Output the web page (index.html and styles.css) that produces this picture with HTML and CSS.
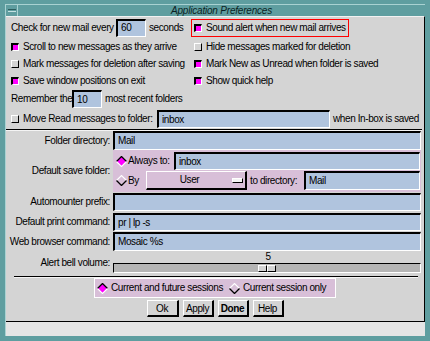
FILE: index.html
```html
<!DOCTYPE html>
<html>
<head>
<meta charset="utf-8">
<title>Application Preferences</title>
<link rel="stylesheet" href="styles.css">
</head>
<body>
<div class="window">
  <div class="frame">
    <div class="titlebar">
      <div class="menubtn"><span class="menubar"></span></div>
      <div class="title">Application Preferences</div>
    </div>
    <div class="content">
      <div class="opts">
        <div class="cell">
          <span class="lbl w-check">Check for new mail every</span>
          <span class="field f-60">60</span>
          <span class="after">seconds</span>
        </div>
        <div class="cell rc-alert">
          <div class="alertbox"><span class="cb on"></span><span>Sound alert when new mail arrives</span></div>
        </div>
        <div class="cell"><span class="cb on"></span><span>Scroll to new messages as they arrive</span></div>
        <div class="cell rc"><span class="cb"></span><span>Hide messages marked for deletion</span></div>
        <div class="cell"><span class="cb"></span><span>Mark messages for deletion after saving</span></div>
        <div class="cell rc"><span class="cb on"></span><span>Mark New as Unread when folder is saved</span></div>
        <div class="cell"><span class="cb on"></span><span>Save window positions on exit</span></div>
        <div class="cell rc"><span class="cb on"></span><span>Show quick help</span></div>
        <div class="cell span2">
          <span class="lbl w-remember">Remember the</span>
          <span class="field f-10">10</span>
          <span class="after">most recent folders</span>
        </div>
        <div class="cell span2">
          <span class="cb"></span>
          <span class="lbl w-move">Move Read messages to folder:</span>
          <span class="field f-move">inbox</span>
          <span class="after">when In-box is saved</span>
        </div>
      </div>

      <div class="sep sep-full"></div>

      <div class="form">
        <div class="frow fr-dir">
          <div class="flabel">Folder directory:</div>
          <div class="field fv h19">Mail</div>
        </div>
        <div class="frow fr-save">
          <div class="flabel">Default save folder:</div>
          <div class="savepanel">
            <div class="sprow sp-a">
              <svg class="radio" width="11" height="11" viewBox="0 0 11 11"><polygon points="5.5,0.5 10.5,5.5 5.5,10.5 0.5,5.5" fill="#ff00ff"/><polyline points="0.5,5.5 5.5,0.5 10.5,5.5" fill="none" stroke="#000" stroke-width="1.3"/><polyline points="0.5,5.5 5.5,10.5 10.5,5.5" fill="none" stroke="#fff" stroke-width="1.1"/></svg>
              <span class="rlabel w-always">Always to:</span>
              <span class="field grow h18">inbox</span>
            </div>
            <div class="sprow sp-b">
              <svg class="radio" width="11" height="11" viewBox="0 0 11 11"><polyline points="0.5,5.5 5.5,0.5 10.5,5.5" fill="none" stroke="#fff" stroke-width="1.1"/><polyline points="0.5,5.5 5.5,10.5 10.5,5.5" fill="none" stroke="#000" stroke-width="1.3"/></svg>
              <span class="rlabel w-by">By</span>
              <div class="optmenu"><span class="optlabel">User</span><span class="optind"></span></div>
              <span class="todir">to directory:</span>
              <span class="field grow h19">Mail</span>
            </div>
          </div>
        </div>
        <div class="frow fr-auto">
          <div class="flabel">Automounter prefix:</div>
          <div class="field fv h18"></div>
        </div>
        <div class="frow fr-print">
          <div class="flabel">Default print command:</div>
          <div class="field fv h18">pr | lp -s</div>
        </div>
        <div class="frow fr-web">
          <div class="flabel">Web browser command:</div>
          <div class="field fv h19">Mosaic %s</div>
        </div>
        <div class="frow fr-alert">
          <div class="flabel alertlbl">Alert bell volume:</div>
          <div class="scale">
            <div class="scaleval">5</div>
            <div class="trough"><span class="thumb"><span class="thalf"></span><span class="thalf"></span></span></div>
          </div>
        </div>
      </div>

      <div class="sep sep-short"></div>

      <div class="sessbox">
        <svg class="radio" width="11" height="11" viewBox="0 0 11 11"><polygon points="5.5,0.5 10.5,5.5 5.5,10.5 0.5,5.5" fill="#ff00ff"/><polyline points="0.5,5.5 5.5,0.5 10.5,5.5" fill="none" stroke="#000" stroke-width="1.3"/><polyline points="0.5,5.5 5.5,10.5 10.5,5.5" fill="none" stroke="#fff" stroke-width="1.1"/></svg>
        <span class="sesslabel">Current and future sessions</span>
        <svg class="radio second" width="11" height="11" viewBox="0 0 11 11"><polyline points="0.5,5.5 5.5,0.5 10.5,5.5" fill="none" stroke="#fff" stroke-width="1.1"/><polyline points="0.5,5.5 5.5,10.5 10.5,5.5" fill="none" stroke="#000" stroke-width="1.3"/></svg>
        <span class="sesslabel">Current session only</span>
      </div>

      <div class="buttons">
        <button class="btn b-ok">Ok</button>
        <button class="btn b-apply">Apply</button>
        <button class="btn b-done">Done</button>
        <button class="btn b-help">Help</button>
      </div>
    </div>
    <div class="status"></div>
  </div>
</div>
</body>
</html>
```

FILE: styles.css
```css
* { box-sizing: border-box; }

html, body {
  margin: 0;
  padding: 0;
  background: #5f9ea0;
}

body {
  font-family: "Liberation Sans", Arial, sans-serif;
  font-size: 10px;
  letter-spacing: -0.4px;
  line-height: 12px;
  color: #000;
}

.window {
  width: 430px;
  height: 341px;
  background: #5f9ea0;
  padding: 4px 5px 5px 5px;
}

.frame {
  width: 420px;
  height: 332px;
  display: flex;
  flex-direction: column;
  border-top: 1px solid #a9d2d2;
  border-left: 1px solid #a9d2d2;
}

.titlebar {
  height: 11px;
  display: flex;
  background: #5f9ea0;
}

.menubtn {
  width: 12px;
  border-right: 1px solid #a9d2d2;
  display: flex;
  align-items: center;
  justify-content: center;
}

.menubar {
  width: 8px;
  height: 3px;
  border-top: 1px solid #2c5e5e;
  border-bottom: 1px solid #c4e2e2;
  background: #5f9ea0;
}

.title {
  flex: 1;
  text-align: center;
  font-style: italic;
  line-height: 11px;
  letter-spacing: -0.2px;
  color: #0b1f1f;
}

.content {
  height: 306px;
  background: #d4d4d4;
  border-top: 1px solid #f2f2f2;
  border-right: 1px solid #000;
  border-bottom: 1px solid #000;
  display: flex;
  flex-direction: column;
}

.status {
  height: 14px;
  background: #e5e5e5;
}

/* top options grid */
.opts {
  display: grid;
  grid-template-columns: 180px 1fr;
  grid-template-rows: 21px 17px 17px 17px 20px 20px;
  padding-left: 5px;
}

.cell {
  display: flex;
  align-items: center;
  white-space: nowrap;
}

.span2 { grid-column: 1 / 3; }

.rc { padding-left: 3px; }

.alertbox {
  width: 158px;
  height: 18px;
  border: 1px solid #ff0000;
  padding-left: 2px;
  display: flex;
  align-items: center;
}

.cb {
  flex: none;
  width: 8px;
  height: 8px;
  margin-right: 4px;
  background: #d4d4d4;
  border-style: solid;
  border-width: 1px;
  border-color: #fff #000 #000 #fff;
}

.cb.on {
  background: #ff00ff;
  border-width: 2px 1px 1px 2px;
  border-color: #000 #fff #fff #000;
}

.lbl { flex: none; }
.w-check { width: 105px; }
.w-remember { width: 61px; }
.w-move { width: 134px; }

.after { margin-left: 3px; }

.field {
  flex: none;
  display: flex;
  align-items: center;
  height: 18px;
  padding: 0 3px;
  background: #b0c4de;
  border-style: solid;
  border-width: 2px 1px 1px 2px;
  border-color: #000 #fff #fff #000;
  white-space: nowrap;
}

.f-60 { width: 30px; }
.f-10 { width: 30px; }
.f-move { width: 173px; }

.h18 { height: 18px; }
.h19 { height: 19px; }

.grow { flex: 1; }

/* separators */
.sep {
  height: 2px;
  border-top: 1px solid #000;
  border-bottom: 1px solid #f4f4f4;
}

.sep-full { margin-right: 2px; }

.sep-short {
  margin: 3px 6px 0 8px;
}

/* form */
.form {
  display: flex;
  flex-direction: column;
}

.frow {
  display: flex;
  align-items: center;
}

.flabel {
  flex: none;
  width: 107px;
  padding-right: 3px;
  text-align: right;
  white-space: nowrap;
}

.fv { width: 308px; }

.fr-auto { margin-top: 1px; }
.fr-print { margin-top: 2px; }
.fr-web { margin-top: 1px; }
.fr-alert { margin-top: 1px; align-items: flex-end; }
.alertlbl { margin-bottom: 4px; }

.savepanel {
  width: 308px;
  height: 42px;
  background: #d8bfd8;
  padding: 2px 1px 2px 3px;
  display: flex;
  flex-direction: column;
  gap: 1px;
}

.sprow {
  display: flex;
  align-items: center;
}

.sp-a { height: 18px; }
.sp-b { height: 19px; }

.radio {
  flex: none;
  display: block;
  margin-right: 1px;
}

.rlabel { flex: none; white-space: nowrap; }
.w-always { width: 46px; }
.w-by { width: 18px; }

.optmenu {
  flex: none;
  width: 101px;
  height: 19px;
  display: flex;
  align-items: center;
  background: #d8bfd8;
  border-style: solid;
  border-width: 1px 2px 2px 1px;
  border-color: #fff #000 #000 #fff;
}

.optlabel {
  flex: 1;
  text-align: center;
}

.optind {
  width: 11px;
  height: 5px;
  margin-right: 2px;
  background: #f4f4f4;
  border-style: solid;
  border-width: 1px;
  border-color: #fff #000 #000 #fff;
}

.todir {
  flex: none;
  width: 54px;
  margin-left: 3px;
  white-space: nowrap;
}

/* scale */
.scale {
  width: 308px;
  display: flex;
  flex-direction: column;
}

.scaleval {
  height: 11px;
  line-height: 10px;
  text-align: center;
  padding-left: 2px;
}

.trough {
  height: 10px;
  background: #b5b5b5;
  border-style: solid;
  border-width: 1px;
  border-color: #000 #fff #fff #000;
  display: flex;
  justify-content: center;
  align-items: center;
}

.thumb {
  display: flex;
  height: 7px;
}

.thalf {
  width: 9px;
  height: 7px;
  background: #d4d4d4;
  border-style: solid;
  border-width: 1px;
  border-color: #fff #000 #000 #fff;
}

/* session radio box */
.sessbox {
  align-self: center;
  width: 242px;
  height: 20px;
  background: #d8bfd8;
  border: 1px solid #fff;
  padding-left: 2px;
  display: flex;
  align-items: center;
  white-space: nowrap;
}

.sesslabel { margin-left: 2px; }

.radio.second { margin-left: 6px; }

/* buttons */
.buttons {
  margin-top: 2px;
  display: flex;
  justify-content: center;
  gap: 4px;
}

.btn {
  height: 17px;
  padding: 0;
  font-family: "Liberation Sans", Arial, sans-serif;
  font-size: 10px;
  letter-spacing: -0.4px;
  color: #000;
  background: #d4d4d4;
  border-style: solid;
  border-width: 1px 2px 2px 1px;
  border-color: #fff #000 #000 #fff;
  border-radius: 0;
}

.b-ok { width: 32px; }
.b-apply { width: 31px; }
.b-done { width: 31px; font-weight: bold; }
.b-help { width: 31px; }
```
